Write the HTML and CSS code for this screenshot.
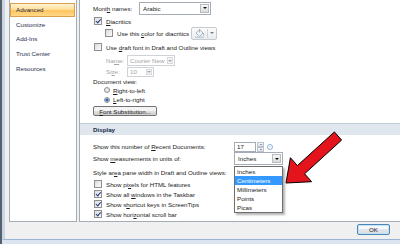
FILE: index.html
```html
<!DOCTYPE html>
<html>
	<head>
		<title>Word Options - Advanced</title>
		<link rel="stylesheet" href="styles.css">
	</head>
	<body>
		<div class="window">
			<div class="inner">
				<div class="panes">
					<ul class="nav">
						<li class="selected">Advanced</li>
						<li>Customize</li>
						<li>Add-Ins</li>
						<li>Trust Center</li>
						<li>Resources</li>
					</ul>
					<div class="main">
						<div class="row h-month">
							<span class="lbl w-month">Mont<u>h</u> names:</span>
							<span class="select s-month"><span class="val">Arabic</span><span class="drop"><i class="tri"></i></span></span>
						</div>
						<div class="row h-diac">
							<span class="cb on"></span><span><u>D</u>iacritics</span>
						</div>
						<div class="row h-color sub">
							<span class="cb"></span><span>Use this <u>c</u>olor for diacritics</span>
							<span class="colorbtn">
								<svg width="11" height="10" viewBox="0 0 11 10">
									<path d="M2 5 L5.5 1.5 L9 5 L5.5 8.5 Z" fill="#f4f6f8" stroke="#9aa3ad" stroke-width="0.8"/>
									<path d="M5.5 1.5 L5.5 4.5" stroke="#9aa3ad" stroke-width="0.8"/>
									<path d="M9 5 Q10.2 6.5 9.6 7.6" fill="none" stroke="#7fa7d6" stroke-width="1"/>
									<rect x="1" y="8.6" width="9" height="1.2" fill="#b9c6d4"/>
								</svg>
								<span class="sep"></span>
								<i class="tri light"></i>
							</span>
						</div>
						<div class="row h-draft">
							<span class="cb"></span><span>Use <u>d</u>raft font in Draft and Outline views</span>
						</div>
						<div class="row h-name sub2 off">
							<span class="lbl w-font">Na<u>m</u>e:</span>
							<span class="select s-name"><span class="val">Courier New</span><span class="drop"><i class="tri"></i></span></span>
						</div>
						<div class="row h-size sub2 off">
							<span class="lbl w-font">Si<u>z</u>e:</span>
							<span class="select s-size"><span class="val">10</span><span class="drop"><i class="tri"></i></span></span>
						</div>
						<div class="row h-doc">Document view:</div>
						<div class="row h-rtl sub">
							<span class="radio"></span><span><u>R</u>ight-to-left</span>
						</div>
						<div class="row h-ltr sub">
							<span class="radio on"></span><span><u>L</u>eft-to-right</span>
						</div>
						<div class="row h-btn">
							<span class="btn"><span><u>F</u>ont Substitution...</span></span>
						</div>

						<div class="section">Display</div>

						<div class="row h-recent">
							<span class="lbl w-wide">Show this number of <u>R</u>ecent Documents:</span>
							<span class="num">17</span>
							<span class="spin"><span class="up"><i class="tri up"></i></span><span class="dn"><i class="tri"></i></span></span>
							<span class="info">i</span>
						</div>
						<div class="row h-measure">
							<span class="lbl w-wide">Show <u>m</u>easurements in units of:</span>
							<span class="combo">
								<span class="select s-measure"><span class="val">Inches</span><span class="drop"><i class="tri"></i></span></span>
								<ul class="list">
									<li>Inches</li>
									<li class="hl">Centimeters</li>
									<li>Millimeters</li>
									<li>Points</li>
									<li>Picas</li>
								</ul>
							</span>
						</div>
						<div class="row h-style">
							<span class="lbl w-wide">Style ar<u>e</u>a pane width in Draft and Outline views:</span>
						</div>
						<div class="row h-check">
							<span class="cb"></span><span>Show pi<u>x</u>els for HTML features</span>
						</div>
						<div class="row h-check">
							<span class="cb on"></span><span>Show all <u>w</u>indows in the Taskbar</span>
						</div>
						<div class="row h-check">
							<span class="cb on"></span><span>Show s<u>h</u>ortcut keys in ScreenTips</span>
						</div>
						<div class="row h-check">
							<span class="cb on"></span><span>Show hori<u>z</u>ontal scroll bar</span>
						</div>
					</div>
				</div>
				<div class="footer">
					<span class="okbtn">OK</span>
				</div>
			</div>
		</div>

		<svg class="arrow" width="400" height="244" viewBox="0 0 400 244">
			<polygon points="286,183 311.6,181.7 304.6,173.8 341.6,140.1 334.4,131.9 297.4,165.6 290.4,157.7" fill="#e3141c" stroke="#000" stroke-width="1" stroke-linejoin="miter"/>
		</svg>
	</body>
</html>
```

FILE: styles.css
```css
body {
	margin: 0;
	width: 400px;
	height: 244px;
	overflow: hidden;
	position: relative;
	background: #dbe5f0;
	font-family: "Liberation Sans", Arial, sans-serif;
	font-size: 6.2px;
	color: #1a1a1a;
}

u {
	text-decoration-thickness: 0.5px;
	text-underline-offset: 1px;
}

.window {
	height: 244px;
	border-left: 2px solid #56606b;
}

.inner {
	height: 239px;
	border-left: 3px solid #c7d5e5;
	border-bottom: 1px solid #9ab5d3;
	background: #f0f0f0;
	overflow: hidden;
}

.panes {
	display: flex;
	gap: 2px;
	height: 222px;
	padding-left: 4px;
}

/* left navigation */
.nav {
	flex: none;
	width: 68px;
	box-sizing: border-box;
	margin: 0;
	padding: 3px 1px 0 0;
	list-style: none;
	background: #fff;
	border: 1px solid #a4acb6;
	border-top: none;
}

.nav li {
	height: 14.7px;
	line-height: 14.7px;
	padding-left: 6px;
	box-sizing: border-box;
	color: #1f2e4d;
}

.nav li.selected {
	height: 13.7px;
	margin-bottom: 1px;
	line-height: 11.7px;
	padding-left: 5px;
	border: 1px solid #d9a04e;
	background: linear-gradient(#fff4d6, #ffe09a 45%, #ffc55e 55%, #ffd98a);
}

/* main pane */
.main {
	flex: none;
	width: 340px;
	box-sizing: border-box;
	padding: 1px 0 0 13px;
	background: #fff;
	border: 1px solid #a4acb6;
	border-top: none;
}

.row {
	display: flex;
	align-items: center;
	white-space: nowrap;
}

.sub {
	padding-left: 11px;
}

.sub2 {
	padding-left: 13px;
}

.h-month { height: 14px; }
.h-diac { height: 12px; }
.h-color { height: 12px; }
.h-draft { height: 16px; }
.h-name { height: 11px; }
.h-size { height: 11px; }
.h-doc { height: 9px; }
.h-rtl { height: 8px; }
.h-ltr { height: 11px; }
.h-btn { height: 10px; margin-top: 1px; }
.h-recent { height: 11px; }
.h-measure { height: 13px; }
.h-style { height: 14px; }
.h-check { height: 10px; }

.lbl {
	flex: none;
}

.w-month { width: 46px; }
.w-font { width: 21px; }
.w-wide { width: 141px; }

.off {
	color: #a3a3a3;
}

/* checkbox */
.cb {
	flex: none;
	position: relative;
	width: 8px;
	height: 8px;
	box-sizing: border-box;
	margin: 0 4px 0 1px;
	border: 1px solid #8e8f8f;
	background: linear-gradient(135deg, #d9dcdf, #fbfbfb);
}

.cb.on::after {
	content: "";
	position: absolute;
	left: 1.8px;
	top: 0;
	width: 1.6px;
	height: 3.6px;
	border: solid #26357f;
	border-width: 0 1.3px 1.3px 0;
	transform: rotate(40deg);
}

/* radio */
.radio {
	flex: none;
	width: 6px;
	height: 6px;
	box-sizing: border-box;
	margin-right: 3px;
	border: 1px solid #8e8f8f;
	border-radius: 50%;
	background: radial-gradient(#f6f6f6, #d5d7da);
}

.radio.on {
	background: radial-gradient(circle, #2a64c4 0 1.3px, #dfe3e8 1.8px);
}

/* combo boxes */
.select {
	flex: none;
	display: flex;
	align-items: stretch;
	box-sizing: border-box;
	padding: 1px;
	border: 1px solid #a5acb5;
	background: #fff;
}

.select .val {
	flex: 1;
	padding-left: 2px;
	display: flex;
	align-items: center;
	overflow: hidden;
}

.drop {
	width: 9px;
	box-sizing: border-box;
	display: flex;
	align-items: center;
	justify-content: center;
	border: 1px solid #b7bcc3;
	background: linear-gradient(#f7f7f7, #dadada);
}

.tri {
	width: 0;
	height: 0;
	border-left: 2px solid transparent;
	border-right: 2px solid transparent;
	border-top: 2px solid #111;
}

.tri.up {
	border-top: none;
	border-bottom: 2px solid #111;
}

.tri.light {
	border-top-color: #7a7a7a;
}

.s-month { width: 72px; height: 13px; }
.s-name { width: 48px; height: 11px; }
.s-size { width: 27px; height: 10px; }
.s-measure { width: 49px; height: 13px; }

.off .select {
	border-color: #cfd3d8;
}

.off .select .val {
	padding-left: 1px;
}

.off .drop {
	width: 6px;
	border-color: #d6d9dd;
	background: #f4f4f4;
}

.off .tri {
	border-top-color: #a8a8a8;
}

.colorbtn {
	display: flex;
	align-items: center;
	gap: 1px;
	height: 13px;
	box-sizing: border-box;
	margin-left: 2px;
	padding: 0 2px 0 2px;
	border: 1px solid #c5cad0;
	border-radius: 2px;
	background: linear-gradient(#fbfbfb, #e9ecef);
}

.colorbtn .sep {
	width: 1px;
	height: 9px;
	margin: 0 1px;
	background: #d0d4d9;
}

/* buttons */
.btn {
	display: flex;
	align-items: center;
	justify-content: center;
	width: 64px;
	height: 10px;
	box-sizing: border-box;
	border: 1px solid #737373;
	border-radius: 2px;
	background: linear-gradient(#f4f4f4 50%, #e0e0e0 50%, #d0d0d0);
}

.section {
	height: 11px;
	margin: 7px 0 6px -13px;
	padding-left: 13px;
	line-height: 11px;
	border-top: 1px solid #c4ccd6;
	background: #dfe6ee;
	font-weight: bold;
	color: #17284a;
}

/* spin boxes */
.num {
	flex: none;
	width: 22px;
	height: 10px;
	box-sizing: border-box;
	padding-left: 2px;
	line-height: 8px;
	border: 1px solid #a5acb5;
	background: #fff;
}

.spin {
	display: flex;
	flex-direction: column;
	width: 7px;
	height: 10px;
	margin-left: 1px;
}

.spin span {
	flex: 1;
	display: flex;
	align-items: center;
	justify-content: center;
	border: 1px solid #b9c3ce;
	background: linear-gradient(#f5f7f9, #dfe4ea);
}

.spin .tri {
	border-left-width: 1.5px;
	border-right-width: 1.5px;
	border-top-width: 1.5px;
	border-top-color: #3d4a5a;
}

.spin .tri.up {
	border-bottom: 1.5px solid #3d4a5a;
}

.info {
	width: 6px;
	height: 6px;
	box-sizing: border-box;
	margin-left: 3px;
	border: 1px solid #8eb2da;
	border-radius: 50%;
	font-size: 4px;
	line-height: 4px;
	text-align: center;
	color: #6f9dd2;
}

/* opened drop down */
.combo {
	position: relative;
}

.list {
	position: absolute;
	top: 14px;
	left: 0;
	width: 49px;
	box-sizing: border-box;
	margin: 0;
	padding: 0;
	list-style: none;
	border: 1px solid #6e6e6e;
	background: #fff;
	box-shadow: 2px 2px 2px rgba(0, 0, 0, 0.3);
	z-index: 2;
}

.list li {
	height: 9px;
	line-height: 9px;
	padding-left: 2px;
}

.list li.hl {
	background: #3399ff;
	color: #fff;
}

/* footer */
.footer {
	display: flex;
	justify-content: flex-end;
	padding: 2px 10px 0 0;
}

.okbtn {
	display: flex;
	align-items: center;
	justify-content: center;
	width: 33px;
	height: 11px;
	box-sizing: border-box;
	border: 1px solid #4a86b8;
	border-radius: 2px;
	background: linear-gradient(#f6f8fa 50%, #e3e6ea 50%, #d8dce1);
	box-shadow: inset 0 0 0 1px #c5e2f6;
}

.arrow {
	position: absolute;
	top: 0;
	left: 0;
	z-index: 5;
	pointer-events: none;
}
```
